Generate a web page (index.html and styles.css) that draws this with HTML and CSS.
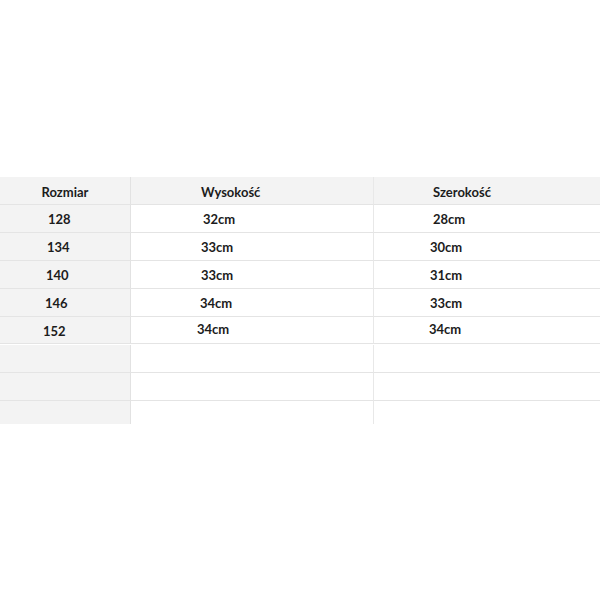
FILE: index.html
```html
<!DOCTYPE html>
<html lang="pl">
<head>
<meta charset="utf-8">
<title>Tabela rozmiarów</title>
<link rel="stylesheet" href="styles.css">
</head>
<body>
<div class="sheet">
  <div class="cell head c1 center">Rozmiar</div>
  <div class="cell head c2">Wysokość</div>
  <div class="cell head c3 pad-r">Szerokość</div>

  <div class="cell c1 n1">128</div>
  <div class="cell c2 sh2">32cm</div>
  <div class="cell c3 sh3">28cm</div>

  <div class="cell c1">134</div>
  <div class="cell c2">33cm</div>
  <div class="cell c3">30cm</div>

  <div class="cell c1 n-1">140</div>
  <div class="cell c2">33cm</div>
  <div class="cell c3">31cm</div>

  <div class="cell c1 n-2">146</div>
  <div class="cell c2 sh-1">34cm</div>
  <div class="cell c3">33cm</div>

  <div class="cell c1 n-4 short">152</div>
  <div class="cell c2 sh-4 short up">34cm</div>
  <div class="cell c3 sh-1 short up">34cm</div>

  <div class="cell c1"></div>
  <div class="cell c2"></div>
  <div class="cell c3"></div>

  <div class="cell c1"></div>
  <div class="cell c2"></div>
  <div class="cell c3"></div>

  <div class="cell c1 last"></div>
  <div class="cell c2 last"></div>
  <div class="cell c3 last"></div>
</div>
</body>
</html>
```
FILE: styles.css
```css
* { box-sizing: border-box; }
html, body { margin: 0; padding: 0; background: #fff; }
body {
  width: 600px;
  height: 600px;
  font-family: Lato, "Open Sans", "Liberation Sans", sans-serif;
  font-weight: 700;
  font-size: 13px;
  color: #1c1c1c;
}
.sheet {
  margin-top: 177px;
  display: grid;
  grid-template-columns: 131px 243px 1fr;
  grid-auto-rows: 28px;
}
.cell {
  border-bottom: 1px solid #e4e4e4;
  display: flex;
  align-items: center;
  white-space: nowrap;
  padding-top: 1px;
}
.c1 {
  background: #f3f3f3;
  border-right: 1px solid #e2e2e2;
  padding-left: 47px;
}
.c2 {
  border-right: 1px solid #e8e8e8;
  padding-left: 70px;
}
.c3 { padding-left: 56px; }
.head { background: #f3f3f3; padding-top: 3px; }
.c1.center { justify-content: center; padding-left: 0; }
.c2.head { padding-left: 70px; }
.c3.pad-r { padding-left: 59px; }
.n1 { padding-left: 48px; }
.n-1 { padding-left: 46px; }
.n-2 { padding-left: 45px; }
.n-4 { padding-left: 43px; }
.c2.sh2 { padding-left: 72px; }
.c2.sh-1 { padding-left: 69px; }
.c2.sh-4 { padding-left: 66px; }
.c3.sh3 { padding-left: 59px; }
.c3.sh-1 { padding-left: 55px; }
.short { height: 27px; }
.up { padding-top: 0; padding-bottom: 2px; }
.sheet > .short { align-self: start; }
.last { border-bottom: none; height: 23px; }
```
